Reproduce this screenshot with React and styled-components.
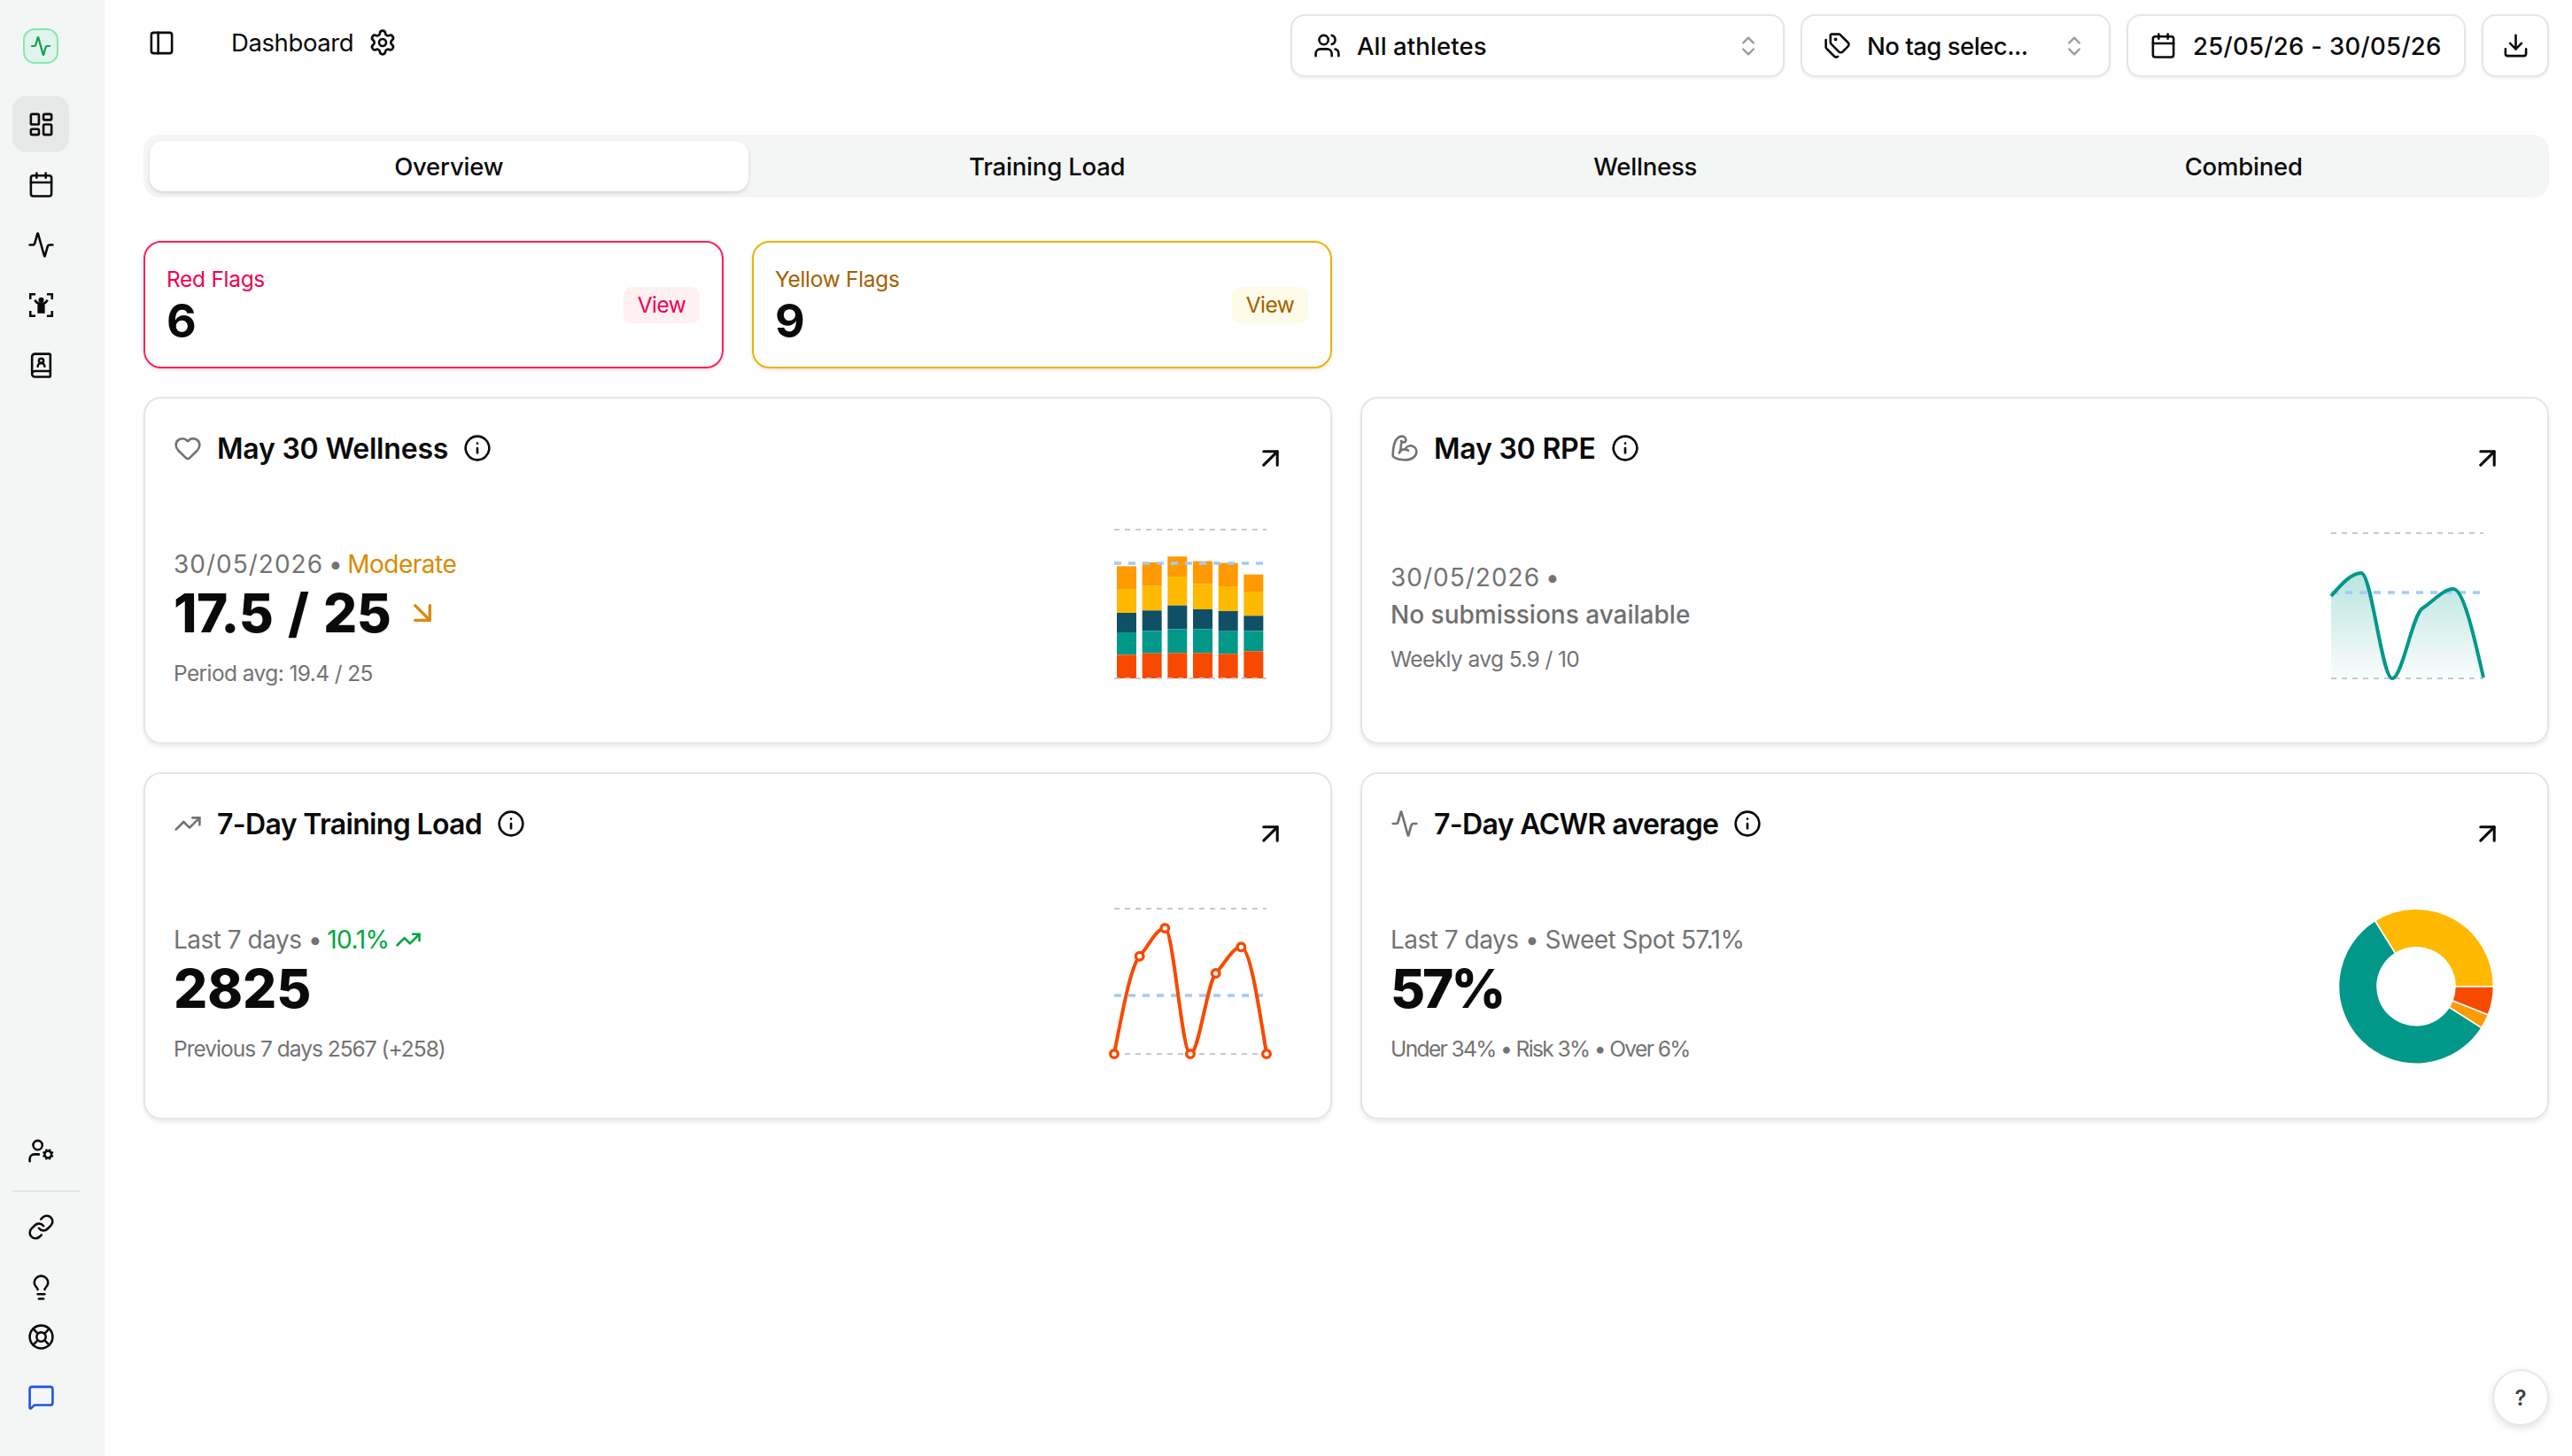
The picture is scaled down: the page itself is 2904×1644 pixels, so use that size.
import React from 'react'
import styled, { createGlobalStyle } from 'styled-components'
import {
  Activity,
  ArrowDownRight,
  ArrowUpRight,
  BicepsFlexed,
  BookUser,
  Calendar,
  ChevronsUpDown,
  Download,
  Heart,
  Info,
  LayoutDashboard,
  LifeBuoy,
  Lightbulb,
  Link,
  MessageSquare,
  PanelLeft,
  Settings,
  Tags,
  TrendingUp,
  UserCog,
  Users,
} from 'lucide-react'

const ORANGE = '#f74a00'
const AMBER = '#ff9a00'
const YELLOW = '#ffb900'
const NAVY = '#105066'
const TEAL = '#01988a'
const GRID = '#c9c9c9'
const AVG = '#a3c9f9'

const GlobalStyle = createGlobalStyle`
  * {
    box-sizing: border-box;
  }
  html,
  body {
    margin: 0;
    background: #fff;
    color: #0a0a0a;
    font-family: Inter, 'Liberation Sans', sans-serif;
  }
`

const Shell = styled.div`
  display: flex;
  min-height: 100vh;
`

const Sidebar = styled.aside`
  width: 118px;
  flex-shrink: 0;
  background: #f4f6f5;
  padding: 32px 0 35px 14px;
  display: flex;
  flex-direction: column;
`

const Logo = styled.div`
  width: 40px;
  height: 40px;
  margin-left: 12px;
  margin-bottom: 36px;
  border-radius: 13px;
  border: 2px solid #86e8ac;
  background: #e0f3ec;
  color: #10a14a;
  display: flex;
  align-items: center;
  justify-content: center;
`

const NavGroup = styled.nav`
  display: flex;
  flex-direction: column;
  gap: 4px;
`

const NavItem = styled.a`
  width: 64px;
  height: 64px;
  border-radius: 16px;
  display: flex;
  align-items: center;
  justify-content: center;
  color: ${(p) => p.$color || '#0a0a0a'};
  background: ${(p) => (p.$active ? '#e7e8e8' : 'transparent')};
  margin-bottom: ${(p) => (p.$tight ? '-12px' : '0')};
`

const SideDivider = styled.hr`
  width: 76px;
  height: 2px;
  border: 0;
  background: #e4e6e5;
  margin: 9px 0 3px;
`

const Spacer = styled.div`
  flex: 1;
`

const Main = styled.main`
  flex: 1;
  min-width: 0;
  padding: 16px 26px 0 44px;
  position: relative;
`

const TopBar = styled.header`
  display: flex;
  align-items: flex-start;
  justify-content: space-between;
`

const TopLeft = styled.div`
  display: flex;
  align-items: center;
  height: 64px;
  padding-left: 5px;
  color: #0a0a0a;
`

const PageTitle = styled.span`
  font-size: 27.5px;
  letter-spacing: -0.4px;
  margin: 0 17px 0 63px;
`

const Filters = styled.div`
  display: flex;
  gap: 18px;
`

const FilterButton = styled.button`
  height: 71px;
  width: ${(p) => p.$width}px;
  padding: 0 ${(p) => (p.$icon ? '0' : '25px')} 0 ${(p) => (p.$icon ? '0' : '24px')};
  display: flex;
  align-items: center;
  justify-content: ${(p) => (p.$icon ? 'center' : 'flex-start')};
  gap: 18px;
  background: #fff;
  border: 2px solid #e5e5e5;
  border-radius: 16px;
  box-shadow: 0 2px 3px rgba(0, 0, 0, 0.06);
  font: 500 27.5px Inter, 'Liberation Sans', sans-serif;
  color: #0a0a0a;
`

const FilterText = styled.span`
  flex: 1;
  text-align: left;
  white-space: nowrap;
  letter-spacing: ${(p) => p.$spacing || '0'};
`

const Tabs = styled.div`
  margin-top: 65px;
  height: 71px;
  padding: 7px;
  border-radius: 18px;
  background: #f4f6f5;
  display: grid;
  grid-template-columns: repeat(4, 1fr);
`

const Tab = styled.div`
  display: flex;
  align-items: center;
  justify-content: center;
  font-size: 27.5px;
  font-weight: 500;
  letter-spacing: -0.2px;
  border-radius: 15px;
  background: ${(p) => (p.$active ? '#fff' : 'transparent')};
  box-shadow: ${(p) => (p.$active ? '0 2px 4px rgba(0, 0, 0, 0.14)' : 'none')};
`

const Grid = styled.section`
  margin-top: 49px;
  display: grid;
  grid-template-columns: repeat(4, 1fr);
  gap: 32px;
`

const FlagCard = styled.div`
  height: 144px;
  padding: 0 25px 0 24px;
  display: flex;
  align-items: center;
  justify-content: space-between;
  border-radius: 20px;
  border: 2px solid ${(p) => p.$border};
  box-shadow: 0 2px 4px rgba(0, 0, 0, 0.1);
`

const FlagLabel = styled.div`
  font-size: 24.5px;
  line-height: 34px;
  letter-spacing: -0.3px;
  margin-bottom: 3px;
  color: ${(p) => p.$color};
`

const FlagCount = styled.div`
  font-size: 52px;
  line-height: 56px;
  font-weight: 700;
`

const FlagView = styled.span`
  height: 41px;
  width: 86px;
  border-radius: 9px;
  display: flex;
  align-items: center;
  justify-content: center;
  font-size: 24.5px;
  letter-spacing: -0.5px;
  color: ${(p) => p.$color};
  background: ${(p) => p.$bg};
`

const FlagGap = styled.div`
  grid-column: span 2;
`

const Card = styled.article`
  grid-column: span 2;
  height: 392px;
  padding: 32px 0 0 32px;
  border: 2px solid #e5e5e5;
  border-radius: 20px;
  box-shadow: 0 3px 4px rgba(0, 0, 0, 0.08);
`

const CardHead = styled.div`
  display: flex;
  align-items: flex-start;
  justify-content: space-between;
  height: 48px;
  padding-right: 49px;
`

const CardTitle = styled.h3`
  margin: 0;
  height: 48px;
  display: flex;
  align-items: center;
  gap: 17px;
  font-size: 32px;
  font-weight: 600;
  letter-spacing: ${(p) => p.$spacing || '-0.45px'};
  color: #0a0a0a;
  svg:first-child {
    color: #737373;
  }
`

const Expand = styled.span`
  margin-top: 17px;
  color: #0a0a0a;
  display: flex;
`

const CardBody = styled.div`
  margin-top: 58px;
  height: 220px;
  display: flex;
  justify-content: space-between;
  padding-right: 56px;
`

const Metric = styled.div`
  align-self: center;
`

const MetricLabel = styled.div`
  display: flex;
  align-items: center;
  gap: 6px;
  height: 34px;
  margin-bottom: 2px;
  font-size: 28px;
  letter-spacing: -0.5px;
  color: #737373;
  white-space: nowrap;
`

const Stamp = styled.span`
  letter-spacing: 1px;
`

const Tone = styled.span`
  color: ${(p) => p.$color};
  display: flex;
  align-items: center;
  gap: 6px;
`

const MetricValue = styled.div`
  display: flex;
  align-items: center;
  gap: 16px;
  height: 72px;
  font-size: 60px;
  font-weight: 800;
  letter-spacing: ${(p) => p.$spacing || '-0.5px'};
  word-spacing: 4px;
`

const MetricEmpty = styled.div`
  height: 46px;
  display: flex;
  align-items: center;
  font-size: 28px;
  font-weight: 500;
  color: #6f6f6f;
`

const MetricNote = styled.div`
  margin-top: ${(p) => (p.$close ? '10px' : '15px')};
  height: 34px;
  display: flex;
  align-items: center;
  font-size: 24.5px;
  letter-spacing: ${(p) => p.$spacing || '-0.6px'};
  color: #737373;
  white-space: pre;
`

const Chart = styled.svg`
  width: 200px;
  height: 190px;
  flex-shrink: 0;
  display: block;
`

const HelpButton = styled.button`
  position: absolute;
  right: 26px;
  top: 1546px;
  width: 64px;
  height: 64px;
  border-radius: 50%;
  background: #fff;
  border: 2px solid #e8e8e8;
  box-shadow: 0 3px 8px rgba(0, 0, 0, 0.12);
  font: 600 24px Inter, 'Liberation Sans', sans-serif;
  color: #404040;
`

// same curve as d3 curveMonotoneX, the sparkline library draws with it
const monotonePath = (pts) => {
  const n = pts.length
  const dx = pts.slice(1).map((p, i) => p[0] - pts[i][0])
  const slope = pts.slice(1).map((p, i) => (p[1] - pts[i][1]) / dx[i])
  const tan = pts.map((_, i) => {
    if (i === 0) return slope[0]
    if (i === n - 1) return slope[n - 2]
    if (slope[i - 1] * slope[i] <= 0) return 0
    const h = (dx[i - 1] * slope[i] + dx[i] * slope[i - 1]) / (dx[i - 1] + dx[i])
    const sign = Math.sign(slope[i])
    return sign * Math.min(Math.abs(slope[i - 1]), Math.abs(slope[i]), 0.5 * Math.abs(h))
  })
  tan[0] = (3 * slope[0] - tan[1]) / 2
  tan[n - 1] = (3 * slope[n - 2] - tan[n - 2]) / 2
  let d = `M${pts[0][0]},${pts[0][1]}`
  for (let i = 0; i < n - 1; i++) {
    const h = dx[i] / 3
    d += `C${pts[i][0] + h},${pts[i][1] + tan[i] * h} ${pts[i + 1][0] - h},${pts[i + 1][1] - tan[i + 1] * h} ${pts[i + 1][0]},${pts[i + 1][1]}`
  }
  return d
}

const GridLine = ({ x1, x2, y }) => (
  <line x1={x1} x2={x2} y1={y} y2={y} stroke={GRID} strokeWidth="2" strokeDasharray="6 6" />
)

const AvgLine = ({ x1, x2, y }) => (
  <line x1={x1} x2={x2} y1={y} y2={y} stroke={AVG} strokeWidth="3.4" strokeDasharray="8 8" />
)

const wellnessBars = [
  [178, 255, 336, 402, 478],
  [165, 245, 328, 397, 473],
  [145, 213, 311, 391, 472],
  [161, 238, 324, 391, 472],
  [167, 246, 330, 398, 475],
  [206, 264, 346, 397, 466],
]
const barColors = [AMBER, YELLOW, NAVY, TEAL, ORANGE]

const WellnessChart = () => (
  <Chart viewBox="0 0 200 190">
    <GridLine x1={12} x2={184} y={10} />
    {wellnessBars.map((tops, b) =>
      tops.map((top, s) => {
        const bottom = s < 4 ? tops[s + 1] : 558
        return (
          <rect
            key={`${b}-${s}`}
            x={15 + b * 28.67}
            y={top / 3 - 8}
            width={22}
            height={(bottom - top) / 3}
            fill={barColors[s]}
          />
        )
      })
    )}
    <GridLine x1={12} x2={184} y={178} />
    <AvgLine x1={12} x2={180} y={48} />
  </Chart>
)

const rpePoints = [
  [12, 85],
  [46, 59],
  [81, 178],
  [115, 99],
  [150, 77],
  [184, 177],
]

const RpeChart = () => {
  const line = monotonePath(rpePoints)
  return (
    <Chart viewBox="0 0 200 190">
      <defs>
        <linearGradient id="rpeFill" x1="0" y1="0" x2="0" y2="1">
          <stop offset="0" stopColor={TEAL} stopOpacity="0.27" />
          <stop offset="1" stopColor={TEAL} stopOpacity="0.02" />
        </linearGradient>
      </defs>
      <GridLine x1={12} x2={184} y={14} />
      <GridLine x1={12} x2={184} y={178} />
      <path d={`${line}L184,178L12,178Z`} fill="url(#rpeFill)" />
      <AvgLine x1={12} x2={180} y={81} />
      <path d={line} fill="none" stroke={TEAL} strokeWidth="4" />
    </Chart>
  )
}

const loadPoints = [
  [12, 178],
  [40.7, 67.7],
  [69.3, 36],
  [98, 178],
  [126.7, 87],
  [155.3, 57.3],
  [184, 178],
]

const LoadChart = () => (
  <Chart viewBox="0 0 200 190">
    <GridLine x1={12} x2={184} y={14} />
    <GridLine x1={12} x2={184} y={178} />
    <AvgLine x1={12} x2={180} y={112} />
    <path d={monotonePath(loadPoints)} fill="none" stroke={ORANGE} strokeWidth="4" />
    {loadPoints.map(([x, y]) => (
      <circle key={x} cx={x} cy={y} r="4.3" fill="#fff" stroke={ORANGE} strokeWidth="3.4" />
    ))}
  </Chart>
)

const donutSlices = [
  { pct: 6, color: ORANGE },
  { pct: 3, color: AMBER },
  { pct: 57.1, color: TEAL },
  { pct: 33.9, color: YELLOW },
]

const slicePath = (cx, cy, r0, r1, from, to) => {
  const at = (r, a) => `${cx + r * Math.cos(a)},${cy + r * Math.sin(a)}`
  const large = to - from > Math.PI ? 1 : 0
  return `M${at(r1, from)}A${r1},${r1} 0 ${large} 1 ${at(r1, to)}L${at(r0, to)}A${r0},${r0} 0 ${large} 0 ${at(r0, from)}Z`
}

const AcwrDonut = () => {
  let angle = 0
  return (
    <Chart viewBox="0 0 200 190">
      {donutSlices.map(({ pct, color }) => {
        const from = angle
        angle += (pct / 100) * Math.PI * 2
        return (
          <path
            key={color}
            d={slicePath(108, 101.7, 44, 87.5, from, angle)}
            fill={color}
            stroke="#fff"
            strokeWidth="1.6"
          />
        )
      })}
    </Chart>
  )
}

const ScanPerson = ({ size = 31 }) => (
  <svg width={size} height={size} viewBox="0 0 24 24" fill="none" stroke="currentColor" strokeWidth="2">
    <path d="M2.5 7V2.5H7M17 2.5h4.500V7M21.500 17v4.500H17M7 21.500H2.500V17" />
    <path d="M6.500 7.500c1.500 3 3.500 3.500 5.500 3.500s4-.5 5.500-3.500" />
    <circle cx="12" cy="7.600" r="2.400" fill="currentColor" stroke="none" />
    <path d="M8.800 11.200h6.400v8H8.800z" fill="currentColor" stroke="none" />
  </svg>
)

const topNav = [LayoutDashboard, Calendar, Activity, ScanPerson, BookUser]

const App = () => {
  return (
    <>
      <GlobalStyle />
      <Shell>
        <Sidebar>
          <Logo>
            <Activity size={24} strokeWidth={2.2} />
          </Logo>
          <NavGroup>
            {topNav.map((Icon, i) => (
              <NavItem key={i} $active={i === 0}>
                <Icon size={31} />
              </NavItem>
            ))}
          </NavGroup>
          <Spacer />
          <NavGroup>
            <NavItem>
              <UserCog size={31} />
            </NavItem>
            <SideDivider />
            <NavItem>
              <Link size={31} />
            </NavItem>
            <NavItem $tight>
              <Lightbulb size={31} />
            </NavItem>
            <NavItem>
              <LifeBuoy size={31} />
            </NavItem>
            <NavItem $color="#1d52ea">
              <MessageSquare size={31} />
            </NavItem>
          </NavGroup>
        </Sidebar>

        <Main>
          <TopBar>
            <TopLeft>
              <PanelLeft size={31} />
              <PageTitle>Dashboard</PageTitle>
              <Settings size={32} />
            </TopLeft>
            <Filters>
              <FilterButton $width={558}>
                <Users size={31} />
                <FilterText $spacing="0.1px">All athletes</FilterText>
                <ChevronsUpDown size={28} color="#9a9a9a" />
              </FilterButton>
              <FilterButton $width={350}>
                <Tags size={31} />
                <FilterText $spacing="-0.5px">No tag selec...</FilterText>
                <ChevronsUpDown size={28} color="#9a9a9a" />
              </FilterButton>
              <FilterButton $width={383}>
                <Calendar size={31} />
                <FilterText $spacing="0.3px">25/05/26 - 30/05/26</FilterText>
              </FilterButton>
              <FilterButton $width={76} $icon>
                <Download size={31} />
              </FilterButton>
            </Filters>
          </TopBar>

          <Tabs>
            <Tab $active>Overview</Tab>
            <Tab>Training Load</Tab>
            <Tab>Wellness</Tab>
            <Tab>Combined</Tab>
          </Tabs>

          <Grid>
            <FlagCard $border="#ff2056">
              <div>
                <FlagLabel $color="#f0024f">Red Flags</FlagLabel>
                <FlagCount>6</FlagCount>
              </div>
              <FlagView $color="#f0024f" $bg="#fff1f2">
                View
              </FlagView>
            </FlagCard>
            <FlagCard $border="#f0b100">
              <div>
                <FlagLabel $color="#a65f00">Yellow Flags</FlagLabel>
                <FlagCount>9</FlagCount>
              </div>
              <FlagView $color="#a65f00" $bg="#fefce8">
                View
              </FlagView>
            </FlagCard>
            <FlagGap />

            <Card>
              <CardHead>
                <CardTitle $spacing="-0.2px">
                  <Heart size={32} />
                  May 30 Wellness
                  <Info size={32} />
                </CardTitle>
                <Expand>
                  <ArrowUpRight size={37} />
                </Expand>
              </CardHead>
              <CardBody>
                <Metric>
                  <MetricLabel>
                    <Stamp>30/05/2026</Stamp>•<Tone $color="#d98a00">Moderate</Tone>
                  </MetricLabel>
                  <MetricValue>
                    17.5 / 25
                    <ArrowDownRight size={40} color="#d98a00" />
                  </MetricValue>
                  <MetricNote>Period avg: 19.4 / 25</MetricNote>
                </Metric>
                <WellnessChart />
              </CardBody>
            </Card>

            <Card>
              <CardHead>
                <CardTitle $spacing="-0.2px">
                  <BicepsFlexed size={32} />
                  May 30 RPE
                  <Info size={32} />
                </CardTitle>
                <Expand>
                  <ArrowUpRight size={37} />
                </Expand>
              </CardHead>
              <CardBody>
                <Metric>
                  <MetricLabel>
                    <Stamp>30/05/2026</Stamp>•
                  </MetricLabel>
                  <MetricEmpty>No submissions available</MetricEmpty>
                  <MetricNote $close>Weekly avg 5.9 / 10</MetricNote>
                </Metric>
                <RpeChart />
              </CardBody>
            </Card>

            <Card>
              <CardHead>
                <CardTitle $spacing="-0.65px">
                  <TrendingUp size={32} />
                  7-Day Training Load
                  <Info size={32} />
                </CardTitle>
                <Expand>
                  <ArrowUpRight size={37} />
                </Expand>
              </CardHead>
              <CardBody>
                <Metric>
                  <MetricLabel>
                    Last 7 days •
                    <Tone $color="#00a63e">
                      10.1%
                      <TrendingUp size={30} />
                    </Tone>
                  </MetricLabel>
                  <MetricValue $spacing="0">2825</MetricValue>
                  <MetricNote $spacing="-1px">Previous 7 days 2567 (+258)</MetricNote>
                </Metric>
                <LoadChart />
              </CardBody>
            </Card>

            <Card>
              <CardHead>
                <CardTitle $spacing="-0.65px">
                  <Activity size={32} />
                  7-Day ACWR average
                  <Info size={32} />
                </CardTitle>
                <Expand>
                  <ArrowUpRight size={37} />
                </Expand>
              </CardHead>
              <CardBody>
                <Metric>
                  <MetricLabel>Last 7 days • Sweet Spot 57.1%</MetricLabel>
                  <MetricValue $spacing="-3px">57%</MetricValue>
                  <MetricNote $spacing="-1.6px">Under 34% • Risk 3% • Over 6%</MetricNote>
                </Metric>
                <AcwrDonut />
              </CardBody>
            </Card>
          </Grid>

          <HelpButton>?</HelpButton>
        </Main>
      </Shell>
    </>
  )
}

export default App
